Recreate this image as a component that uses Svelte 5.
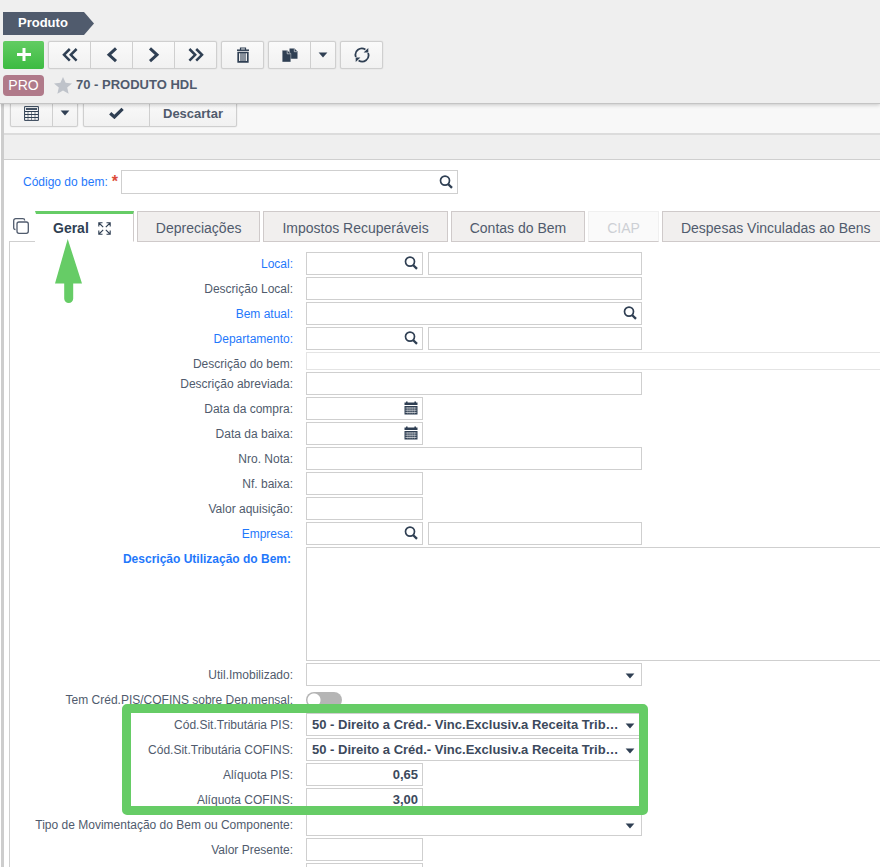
<script>
  const tabs = [
    { name: 'Depreciações' },
    { name: 'Impostos Recuperáveis' },
    { name: 'Contas do Bem' },
    { name: 'CIAP', disabled: true },
    { name: 'Despesas Vinculadas ao Bens' },
  ];

  const upper = [
    { id: 'local', label: 'Local:', link: true, kind: 'lookup' },
    { id: 'desc-local', label: 'Descrição Local:', kind: 'wide' },
    { id: 'bem-atual', label: 'Bem atual:', link: true, kind: 'wide', search: true },
    { id: 'departamento', label: 'Departamento:', link: true, kind: 'lookup' },
    { id: 'desc-bem', label: 'Descrição do bem:', kind: 'full' },
    { id: 'desc-abrev', label: 'Descrição abreviada:', kind: 'wide' },
    { id: 'data-compra', label: 'Data da compra:', kind: 'date' },
    { id: 'data-baixa', label: 'Data da baixa:', kind: 'date' },
    { id: 'nro-nota', label: 'Nro. Nota:', kind: 'wide' },
    { id: 'nf-baixa', label: 'Nf. baixa:', kind: 'short' },
    { id: 'valor-aq', label: 'Valor aquisição:', kind: 'short' },
    { id: 'empresa', label: 'Empresa:', link: true, kind: 'lookup' },
    { id: 'desc-util', label: 'Descrição Utilização do Bem:', link: true, strong: true, kind: 'area' },
    { id: 'util-imob', label: 'Util.Imobilizado:', kind: 'select', value: '' },
    { id: 'tem-cred', label: 'Tem Créd.PIS/COFINS sobre Dep.mensal:', kind: 'toggle' },
  ];

  const taxes = [
    { id: 'cst-pis', label: 'Cód.Sit.Tributária PIS:', kind: 'select', value: '50 - Direito a Créd.- Vinc.Exclusiv.a Receita Trib…' },
    { id: 'cst-cofins', label: 'Cód.Sit.Tributária COFINS:', kind: 'select', value: '50 - Direito a Créd.- Vinc.Exclusiv.a Receita Trib…' },
    { id: 'aliq-pis', label: 'Alíquota PIS:', kind: 'short', value: '0,65' },
    { id: 'aliq-cofins', label: 'Alíquota COFINS:', kind: 'short', value: '3,00' },
  ];

  const lower = [
    { id: 'tipo-mov', label: 'Tipo de Movimentação do Bem ou Componente:', kind: 'select', value: '' },
    { id: 'valor-presente', label: 'Valor Presente:', kind: 'short' },
    { id: 'extra', label: '', kind: 'short' },
  ];
</script>

{#snippet magnifier()}
  <svg class="mag" viewBox="0 0 14 14" width="14" height="14" aria-hidden="true">
    <circle cx="6" cy="5.6" r="4.5" fill="none" stroke="#2f3f53" stroke-width="1.7" />
    <path d="M9 9l4 3.8" stroke="#2f3f53" stroke-width="2.4" />
  </svg>
{/snippet}

{#snippet calendar()}
  <svg viewBox="0 0 14 14" width="14" height="14" aria-hidden="true">
    <path fill="#2f3f53" d="M.5 1.500h1.500V.4h1.600v1.100h6.800V.4H12v1.100h1.500V4H.5zM.5 5h13v8.500H.5z" />
    <path stroke="#fff" stroke-width=".8" d="M1.500 7h11M1.500 9.200h11M1.500 11.400h11" opacity=".85" />
    <path stroke="#fff" stroke-width=".4" d="M3.800 6v7M6 6v7M8.200 6v7M10.400 6v7" opacity=".7" />
  </svg>
{/snippet}

{#snippet caret()}
  <svg viewBox="0 0 10 6" width="10" height="6" aria-hidden="true">
    <path d="M.6.5h8.800L5 5.400z" fill="#2f3f53" />
  </svg>
{/snippet}

{#snippet chevrons(dir, twice)}
  <svg viewBox="0 0 16 16" width="16" height="16" aria-hidden="true">
    <g fill="none" stroke="#2f3f53" stroke-width="3" transform={dir === 'right' ? 'matrix(-1 0 0 1 16 0)' : undefined}>
      {#if twice}
        <path d="M7.800 2L2 7.800l5.800 5.800M14.600 2L8.800 7.800l5.800 5.800" stroke-width="2.500" />
      {:else}
        <path d="M12 1.400L5 7.800l7 6.400" />
      {/if}
    </g>
  </svg>
{/snippet}

{#snippet row(f)}
  <div class="row" class:low={f.kind === 'full'}>
    <label for={f.id} class:link={f.link} class:strong={f.strong}>{f.label}</label>
    {#if f.kind === 'lookup'}
      <div class="field short"><input id={f.id} type="text" /><button class="in" aria-label="Pesquisar">{@render magnifier()}</button></div>
      <div class="field rest"><input type="text" aria-label={f.label} /></div>
    {:else if f.kind === 'wide'}
      <div class="field wide">
        <input id={f.id} type="text" />
        {#if f.search}<button class="in" aria-label="Pesquisar">{@render magnifier()}</button>{/if}
      </div>
    {:else if f.kind === 'full'}
      <div class="field full"><input id={f.id} type="text" /></div>
    {:else if f.kind === 'date'}
      <div class="field short"><input id={f.id} type="text" /><button class="in" aria-label="Calendário">{@render calendar()}</button></div>
    {:else if f.kind === 'short'}
      <div class="field short"><input id={f.id} type="text" class="num" value={f.value ?? ''} aria-label={f.label || 'Valor'} /></div>
    {:else if f.kind === 'area'}
      <textarea id={f.id}></textarea>
    {:else if f.kind === 'select'}
      <div class="field wide">
        <select id={f.id}><option>{f.value}</option></select>
        <span class="arrow">{@render caret()}</span>
      </div>
    {:else}
      <input id={f.id} class="toggle" type="checkbox" />
    {/if}
  </div>
{/snippet}

<div class="app">
  <header>
    <div class="crumb">
      <span>Produto</span><svg viewBox="0 0 10 23" width="10" height="23" aria-hidden="true"><path d="M0 0L10 11.500 0 23z" fill="#505b6d" /></svg>
    </div>
    <div class="bar">
      <button class="add" aria-label="Adicionar">
        <svg viewBox="0 0 16 16" width="16" height="16" aria-hidden="true"><path d="M8 1v13M1 7.500h14" stroke="#fff" stroke-width="3" /></svg>
      </button>
      <div class="group">
        <button class="btn" aria-label="Primeiro">{@render chevrons('left', true)}</button>
        <button class="btn" aria-label="Anterior">{@render chevrons('left', false)}</button>
        <button class="btn" aria-label="Próximo">{@render chevrons('right', false)}</button>
        <button class="btn" aria-label="Último">{@render chevrons('right', true)}</button>
      </div>
      <div class="group">
        <button class="btn" aria-label="Excluir">
          <svg viewBox="0 0 14 16" width="14" height="16" aria-hidden="true">
            <g fill="none" stroke="#2f3f53"><path d="M4.500 3V1h5v2" stroke-width="1.200" /><path d="M1 3.200h12" stroke-width="1.500" /><path d="M2.200 5.500v9.300h9.600V5.500z" stroke-width="1.700" /><path d="M5 6v8M7 6v8M9 6v8" stroke-width="1.100" /></g>
          </svg>
        </button>
      </div>
      <div class="group">
        <button class="btn" aria-label="Duplicar">
          <svg viewBox="0 0 16 16" width="16" height="16" aria-hidden="true">
            <path d="M7.500 1.500h5l3 3v7.200H7.500z" fill="#2f3f53" /><path d="M.2 3.300H5.400l3.400 3.200V15H.2z" fill="#2f3f53" stroke="#f5f5f5" stroke-width=".4" />
            <path d="M5.200 3.500v3.300h3.300M12.300 1.800v2.900h2.900" fill="none" stroke="#f5f5f5" stroke-width=".6" />
          </svg>
        </button>
        <button class="btn thin" aria-label="Mais opções">{@render caret()}</button>
      </div>
      <div class="group">
        <button class="btn" aria-label="Atualizar">
          <svg viewBox="0 0 16 16" width="16" height="16" aria-hidden="true">
            <path d="M1.900 10A6.300 6.300 0 0 1 11.400 2.600M14.100 6A6.300 6.300 0 0 1 4.600 13.400" fill="none" stroke="#2f3f53" stroke-width="1.800" />
            <path d="M9.600 5.600h4.700V.9zM6.400 10.400H1.700v4.700z" fill="#2f3f53" />
          </svg>
        </button>
      </div>
    </div>
    <div class="title">
      <span class="pro">PRO</span>
      <svg viewBox="0 0 18 17" width="18" height="17" aria-hidden="true"><path fill="#bfc3ca" d="M9 0l2.600 5.800 6.400.6-4.800 4.200 1.400 6.200L9 13.600l-5.600 3.200 1.400-6.200L0 6.400l6.400-.6z" /></svg>
      <h1>70 - PRODUTO HDL</h1>
    </div>
  </header>

  <main>
    <div class="bar sub">
      <div class="group">
        <button class="btn" aria-label="Grade">
          <svg viewBox="0 0 15 15" width="15" height="15" aria-hidden="true">
            <path d="M.6.600h13.800v13.800H.6z" fill="none" stroke="#2f3f53" /><path d="M2 3h11" stroke="#2f3f53" stroke-width="1.800" />
            <path d="M1 5.500h13M1 8.500h13M1 11.500h13" stroke="#2f3f53" stroke-width="1.100" /><path d="M4 5v9M7.500 5v9M11 5v9" stroke="#2f3f53" stroke-width=".6" />
          </svg>
        </button>
        <button class="btn thin" aria-label="Mais opções">{@render caret()}</button>
      </div>
      <div class="group">
        <button class="btn save" aria-label="Salvar">
          <svg viewBox="0 0 15 12" width="15" height="12" aria-hidden="true"><path d="M1.200 6.200l4.200 3.800L13.600 1.800" fill="none" stroke="#2f3f53" stroke-width="3.200" /></svg>
        </button>
        <button class="btn text">Descartar</button>
      </div>
    </div>
    <div class="band"></div>

    <div class="code">
      <label for="codigo" class="link">Código do bem:</label><b class="req">*</b>
      <div class="field"><input id="codigo" type="text" /><button class="in" aria-label="Pesquisar">{@render magnifier()}</button></div>
    </div>

    <nav>
      <button class="stack" aria-label="Abas">
        <svg viewBox="0 0 16 16" width="16" height="16" aria-hidden="true"><g fill="none" stroke="#505b6d" stroke-width="1.300"><rect x="4" y="4" width="11.300" height="11.300" rx="2" /><path d="M2.500 11.500C1.300 11.500.7 10.800.7 9.800V2.700C.7 1.500 1.500.7 2.700.7h7.100c1.200 0 1.900.7 1.900 1.700" /></g></svg>
      </button>
      <button class="tab active">
        Geral
        <svg viewBox="0 0 13 13" width="13" height="13" aria-hidden="true"><g fill="none" stroke="#2f3f53" stroke-width="1.100"><path d="M.8 4.500V.8h3.700M8.500.8h3.700v3.700M12.200 8.500v3.700H8.500M4.500 12.200H.8V8.500M1 1l4.200 4.200M12 1L7.800 5.200M12 12L7.800 7.800M1 12l4.200-4.200" /></g></svg>
        <svg class="pointer" viewBox="0 0 27 64" width="27" height="64" aria-hidden="true"><path fill="#66cc66" d="M12.700 0L27 44.500h-8.800V59.500a4.500 4.500 0 0 1-9 0V44.500H0z" /></svg>
      </button>
      {#each tabs as t}
        <button class="tab" disabled={t.disabled}>{t.name}</button>
      {/each}
      <span class="fill"></span>
    </nav>

    <section>
      {#each upper as f}{@render row(f)}{/each}
      <div class="taxes">
        {#each taxes as f}{@render row(f)}{/each}
        <div class="frame"></div>
      </div>
      {#each lower as f}{@render row(f)}{/each}
    </section>
  </main>
</div>

<style>
  :global(body) { background: #fff; overflow: hidden; }
  .app { height: 100vh; overflow: hidden; font-family: "Liberation Sans", Arial, sans-serif; font-size: 12px; color: #505b6d; }
  .app, .app * { box-sizing: border-box; }
  button, input, select, textarea { font: inherit; color: inherit; margin: 0; padding: 0; border: 0; background: none; border-radius: 0; outline: 0; }
  button { display: flex; align-items: center; justify-content: center; }
  svg { display: block; flex: none; }

  header { position: relative; z-index: 1; background: #efefef; padding: 12px 3px 6px; border-bottom: 1px solid #c4c4c4; box-shadow: 0 1px 4px rgba(0, 0, 0, .2); }
  .crumb { display: flex; height: 23px; }
  .crumb span { background: #505b6d; color: #fff; font-weight: bold; font-size: 13px; line-height: 22px; padding: 0 16px 0 15px; }
  .bar { display: flex; gap: 5px; }
  header .bar { padding-top: 6px; gap: 4px; }
  .add { width: 41px; height: 28px; border-radius: 2px; background: linear-gradient(#62cc62, #3dbb42); }
  .group { display: flex; border: 1px solid #cfcfcf; border-radius: 2px; background: linear-gradient(#fafafa, #f1f1f1); box-shadow: 0 0 1px #bbb; }
  .btn { width: 41px; height: 26px; }
  .btn + .btn { border-left: 1px solid #cfcfcf; width: 42px; }
  .btn + .btn.thin { width: 25px; }
  .btn + .btn.text { width: 87px; font-weight: bold; font-size: 13px; }
  .btn.save { width: 65px; }
  .title { display: flex; align-items: center; margin-top: 5px; height: 23px; }
  .title svg { margin: 0 4px 0 10px; }
  .pro { background: #b07a8a; color: #fff; font-size: 14px; line-height: 21px; height: 21px; width: 41px; text-align: center; border-radius: 4px; }
  h1 { margin: 0; font-size: 13px; line-height: 18px; padding-bottom: 2px; font-weight: bold; }

  main { margin-left: 1px; border-left: 3px solid #cdcdcd; margin-top: -5px; }
  .sub { background: #f8f8f8; padding: 0 6px 6px; border-bottom: 2px solid #dcdcdc; }
  .band { height: 25px; background: #efefef; border-bottom: 1px solid #cfcfcf; }

  .link { color: #1f78fb; }
  .code { display: flex; align-items: center; padding: 10px 0 0 19px; }
  .req { color: #dd4b39; font-size: 16px; line-height: 18px; height: 18px; margin: 0 3px 0 4px; }
  .code .field { width: 337px; height: 24px; }

  .field { display: flex; border: 1px solid #cfcfcf; background: #fff; height: 23px; min-width: 0; }
  .field input { flex: 1; min-width: 0; width: 100%; }
  .in { width: 22px; flex: none; padding-bottom: 1px; }

  nav { display: flex; padding-top: 17px; }
  .stack { width: 26px; border-bottom: 1px solid #cfcfcf; margin-left: 5px; padding-right: 2px; flex: none; }
  .tab { position: relative; flex: none; height: 31px; padding: 3px 18px 0; margin-right: 3px; font-size: 14px; background: #f1efee; border: 1px solid #cfcaca; white-space: nowrap; }
  .tab.active { background: #fff; border-top: 3px solid #66cc66; border-bottom-color: #fff; border-left-color: #fff; font-weight: bold; color: #2f3f53; gap: 9px; padding: 1px 22px 0 17px; }
  .tab:disabled { background: #fafafa; border-color: #f0f0f0 #f0f0f0 #cfcaca; color: #cdd0d5; }
  .fill { flex: 1; border-bottom: 1px solid #cfcaca; }
  .pointer { position: absolute; left: 19px; top: 25px; z-index: 2; }

  section { margin-left: 5px; border-left: 1px solid #cfcfcf; padding-top: 10px; display: flex; flex-direction: column; gap: 2px; }
  .row { display: flex; align-items: flex-start; }
  .row label { flex: none; width: 283px; height: 23px; margin-right: 13px; text-align: right; line-height: 24px; white-space: nowrap; }
  .row label.strong { font-weight: bold; padding-right: 2px; }
  .row.low label { height: 18px; }
  .short { width: 117px; }
  .wide { width: 336px; position: relative; }
  .rest { width: 214px; margin-left: 5px; }
  .full { flex: 1; height: 18px; border-color: #e4e4e4; border-right: 0; }
  textarea { flex: 1; height: 114px; border: 1px solid #cfcfcf; border-right: 0; resize: none; }
  .num, select { font-weight: bold; font-size: 13px; color: #3c495c; }
  .num { text-align: right; padding-right: 4px; }
  select { appearance: none; flex: 1; min-width: 0; padding: 0 5px; }
  .arrow { position: absolute; right: 6px; top: 9px; pointer-events: none; }
  .toggle { appearance: none; width: 36px; height: 16px; margin-top: 4px; border-radius: 8px; background: radial-gradient(circle at 8px 8px, #fff 6px, #b5b5b5 7px); }
  .taxes { position: relative; z-index: 1; display: flex; flex-direction: column; gap: 2px; }
  .frame { position: absolute; z-index: 1; left: 112px; top: -9px; width: 526px; height: 111px; border: 9px solid #66cc66; border-radius: 5px; pointer-events: none; }
</style>
